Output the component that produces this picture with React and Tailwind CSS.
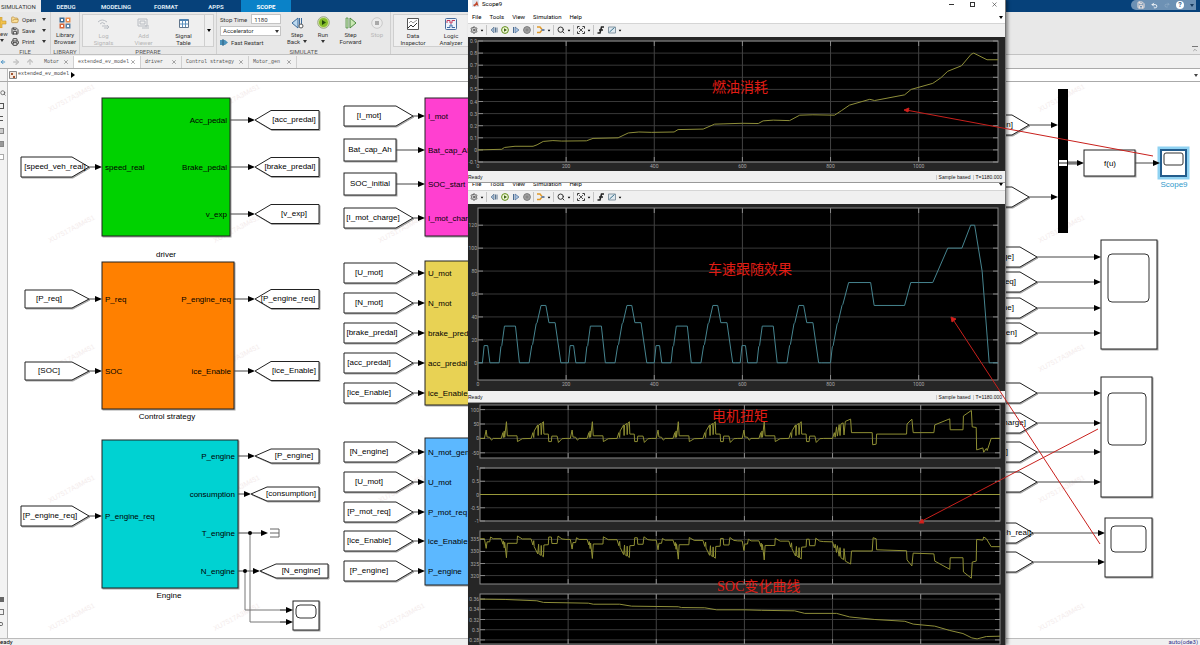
import { ArrowLeft, ArrowRight, ArrowUp, ChevronUp, FolderOpen, Printer, Redo2, Save, Search, Settings, Undo2, X } from 'lucide-react'

const CYCLES = [0, 195, 390, 585]
const repeat = (cycle, drift = 0) =>
  CYCLES.flatMap((start, i) => cycle.map(([t, v]) => [t + start, v - drift * i]))

const FUEL = [
  [0, 0], [54, 0.005], [60, 0.02], [84, 0.03], [125, 0.03], [134, 0.042], [148, 0.07], [170, 0.077], [190, 0.073],
  [246, 0.075], [261, 0.095], [318, 0.1], [341, 0.14], [365, 0.148], [394, 0.145], [445, 0.148], [454, 0.168],
  [511, 0.172], [537, 0.213], [556, 0.215], [600, 0.22], [636, 0.218], [647, 0.24], [670, 0.246], [707, 0.242],
  [730, 0.287], [760, 0.29], [809, 0.287], [825, 0.325], [843, 0.37], [889, 0.418], [900, 0.408], [968, 0.455],
  [983, 0.5], [1032, 0.55], [1050, 0.595], [1066, 0.65], [1097, 0.695], [1119, 0.79], [1125, 0.8], [1155, 0.745], [1180, 0.745],
]

const SPEED = [
  ...repeat([
    [0, 0], [10, 0], [14, 15], [22, 15], [27, 0], [48, 0], [52, 14], [54, 15], [60, 32], [85, 32], [94, 0], [116, 0],
    [122, 15], [124, 16], [132, 34], [134, 35], [143, 50], [154, 50], [161, 35], [175, 35], [188, 0],
  ]),
  [780, 0], [800, 0], [804, 14], [806, 15], [815, 34], [817, 35], [826, 50], [828, 51], [841, 70], [891, 70], [899, 50],
  [968, 50], [982, 70], [1032, 70], [1066, 100], [1098, 100], [1118, 120], [1127, 120], [1144, 80], [1160, 0], [1180, 0],
]

const TORQUE = [
  ...repeat([
    [0, 0], [10, 0], [14, 29], [16, 5], [22, 4], [26, -6], [30, 0], [48, 0], [52, 20], [53, 3], [55, 26], [56, 4],
    [60, 58], [62, 9], [84, 9], [85, -11], [96, -1], [116, 0], [120, 20], [122, 3], [123, 26], [131, 47], [132, 10],
    [133, 46], [138, 52], [139, 13], [141, 54], [144, 58], [145, 15], [155, 15], [156, -11], [162, -11], [163, 8],
    [175, 8], [178, -14], [186, -1],
  ]),
  [780, 0], [800, 0], [804, 20], [806, 4], [809, 40], [811, 8], [815, 48], [817, 10], [819, 50], [824, 54], [826, 12],
  [829, 59], [841, 67], [843, 20], [890, 20], [891, -22], [899, -20], [900, 15], [968, 15], [969, 50], [980, 67],
  [983, 20], [1030, 20], [1032, 47], [1066, 68], [1067, 30], [1096, 30], [1097, 78], [1115, 97], [1117, 40], [1126, 38],
  [1127, -40], [1141, -33], [1143, -48], [1149, -35], [1151, -42], [1160, 0], [1180, 0],
]

const VOLTAGE = [
  ...repeat([
    [0, 335.3], [10, 335.3], [14, 331.3], [16, 334], [22, 334], [24, 336], [30, 335.3], [48, 335.3], [52, 333],
    [53, 334.4], [55, 331.5], [56, 333.8], [60, 327.4], [62, 333.4], [84, 333.4], [85, 336.4], [96, 335.2],
    [116, 335.2], [120, 332.7], [122, 334.5], [123, 332], [131, 329], [133, 333], [134, 329], [138, 328.4],
    [139, 332.5], [140, 328.4], [144, 327.8], [145, 332.7], [155, 332.8], [156, 336], [162, 336], [163, 333.3],
    [175, 333.3], [177, 336.4], [186, 335.2],
  ], 0.3),
  [780, 334.1], [800, 334], [804, 331.5], [806, 333], [809, 329.6], [811, 332.4], [815, 328], [817, 331.6], [819, 327.4],
  [825, 326.6], [826, 331.2], [829, 326], [841, 324.8], [843, 330.2], [890, 330.2], [892, 335.7], [899, 335.3],
  [900, 330.7], [968, 330.3], [969, 326.5], [980, 324], [983, 329.3], [1030, 329], [1032, 326], [1066, 322.6],
  [1067, 327.4], [1096, 327.4], [1097, 321.5], [1115, 318.9], [1117, 325.6], [1126, 326], [1127, 335], [1141, 334.7],
  [1143, 336], [1149, 335.3], [1160, 332], [1180, 332],
]

const SOC = [
  [0, 0.36], [57, 0.3593], [129, 0.3567], [144, 0.3535], [246, 0.352], [257, 0.35], [317, 0.35], [344, 0.3462],
  [450, 0.345], [457, 0.3435], [510, 0.343], [537, 0.339], [600, 0.339], [639, 0.338], [714, 0.337], [737, 0.332],
  [809, 0.332], [839, 0.325], [896, 0.32], [964, 0.3165], [983, 0.311], [1032, 0.307], [1066, 0.2985],
  [1096, 0.2925], [1116, 0.284], [1128, 0.282], [1149, 0.2867], [1180, 0.2873],
]

// One set of axes. left/top/height are the axes box inside a drawing of 538 x boxHeight.
function Plot({ boxHeight, left, top, height, min, max, ticks, data, stroke, showTime = true }) {
  const width = 520
  const px = (t) => left + (t / 1180) * width
  const py = (v) => top + ((max - v) / (max - min)) * height
  return (
    <svg width="538" height={boxHeight} className="block bg-[#262626]">
      <rect x={left} y={top} width={width} height={height} fill="#000" />
      {ticks.map((v) => (
        <g key={v}>
          <path d={`M${left} ${py(v)}h${width}`} stroke="#383838" />
          <path d={`M${left} ${py(v)}h5M${left + width} ${py(v)}h-5`} stroke="#8a8a8a" />
          <text x={left - 1} y={py(v) + 2} textAnchor="end" fontSize="5" fill="#a8a8a8">{v}</text>
        </g>
      ))}
      {[200, 400, 600, 800, 1000].map((t) => (
        <g key={t}>
          <path d={`M${px(t)} ${top}v${height}`} stroke="#424242" />
          <path d={`M${px(t)} ${top}v5M${px(t)} ${top + height}v-5`} stroke="#8a8a8a" />
        </g>
      ))}
      <rect x={left} y={top} width={width} height={height} fill="none" stroke="#8a8a8a" />
      {showTime && [0, 200, 400, 600, 800, 1000].map((t) => (
        <text key={t} x={px(t)} y={top + height + 6} textAnchor="middle" fontSize="5" fill="#a8a8a8">{t}</text>
      ))}
      <polyline points={data.map(([t, v]) => `${px(t)},${py(v)}`).join(' ')} fill="none" stroke={stroke} />
    </svg>
  )
}

function Caret({ className = '' }) {
  return (
    <svg viewBox="0 0 4 3" className={`h-[3px] w-[4px] shrink-0 ${className}`}>
      <path d="M0 0h4L2 3z" fill="currentColor" />
    </svg>
  )
}

const TOOL_ICONS = {
  settings: <Settings size={8} color="#555" strokeWidth={3} />,
  back: <svg width="8" height="8"><path d="M4 1v6L1 4z" fill="#9ab4cf" stroke="#5b7590" strokeWidth=".7" /><path d="M5.500 1.500v5M7 1.500v5" stroke="#5b7590" /></svg>,
  run: <svg width="8" height="8"><circle cx="4" cy="4" r="3.400" fill="#f2f8d8" stroke="#5f8c1a" /><path d="M3 2.200v3.600L6 4z" fill="#3c6414" /></svg>,
  forward: <svg width="8" height="8"><path d="M1.500 1v6" stroke="#4a6c92" /><path d="M3 1l4 3-4 3z" fill="#a9c4e2" stroke="#4a6c92" strokeWidth=".7" /></svg>,
  stop: <svg width="8" height="8"><circle cx="4" cy="4" r="3.400" fill="#a5a5a5" stroke="#7a7a7a" /><path d="M2.500 2.500h3v3h-3z" fill="#888" /></svg>,
  signal: <svg width="9" height="8"><path d="M1 1h3l2 2.500M1 6.500h3l2-2.500" fill="none" stroke="#e09a2c" strokeWidth="1.500" /><path d="M5.500 3h3v2h-3z" fill="#6b83a5" /></svg>,
  zoom: <Search size={8} color="#333" strokeWidth={3} />,
  fit: <svg width="8" height="8"><path d="M.5 2.500v-2h2M5.500.5h2v2M7.500 5.500v2h-2M2.500 7.500h-2v-2" fill="none" stroke="#333" /><path d="M2 2l4 4M6 2l-4 4" stroke="#555" /></svg>,
  trigger: <svg width="8" height="8"><path d="M7 1H4.500L3 7H.5M2 4h4" fill="none" stroke="#222" strokeWidth="1.500" /></svg>,
  measure: <svg width="8" height="8"><path d="M.5 1h7v6h-7z" fill="#dfe8ee" stroke="#8697a3" /><path d="M1.500 6L6.500 1.500" stroke="#3d7590" /></svg>,
}
const TOOLBAR = [
  'settings', 'caret', 'sep', 'back', 'run', 'forward', 'stop', 'sep', 'signal', 'caret', 'sep',
  'zoom', 'caret', 'sep', 'fit', 'caret', 'sep', 'trigger', 'measure', 'caret',
]

function ScopeToolbar() {
  return (
    <div className="flex h-[14px] items-center border-t border-[#d5d5d5] bg-[#f0f0f0] pb-px">
      {TOOLBAR.map((item, i) => {
        if (item === 'sep') return <span key={i} className="mx-px h-[10px] w-px bg-[#c4c4c4]" />
        if (item === 'caret') return <span key={i} className="flex w-[6px] justify-center"><Caret className="scale-75" /></span>
        return <button key={i} aria-label={item} className="flex w-[11px] justify-center">{TOOL_ICONS[item]}</button>
      })}
    </div>
  )
}

function ScopeMenu() {
  return (
    <div className="flex h-[12px] shrink-0 items-center gap-2 bg-white pl-1 text-[6px] leading-none">
      {['File', 'Tools', 'View', 'Simulation', 'Help'].map((m) => <button key={m}>{m}</button>)}
      <Caret className="mr-[2px] ml-auto" />
    </div>
  )
}

function ScopeStatus() {
  return (
    <div className="flex h-[11px] shrink-0 items-center bg-[#f0f0f0] pt-[2px] pr-[3px] font-['Liberation_Sans',sans-serif] text-[5px] leading-none text-[#111]">
      <span className="flex-1">Ready</span>
      <span className="border-l border-[#c8c8c8] px-[2px]">Sample based</span>
      <span className="border-l border-[#c8c8c8] pl-[2px]">T=1180.000</span>
    </div>
  )
}

function ScopeWindows() {
  return (
    <div className="absolute top-0 bottom-0 left-[468px] flex w-[538px] flex-col overflow-hidden border-r border-[#777] bg-[#262626] shadow-[2px_0_3px_rgba(0,0,0,0.4)]">
      <section className="shrink-0">
        <header className="flex h-[11px] items-start bg-white pl-1 text-[6px]">
          <svg width="7" height="7" className="mr-[3px]"><path d="M0 0h7v7H0z" fill="#dfe6ee" /><path d="M1 5l2-1 2-3 1.500 5-2-1-2 1.500z" fill="#c0462a" /></svg>
          <span className="flex-1 leading-[7px]">Scope9</span>
          <div className="flex w-[56px] items-center gap-4 pt-px">
            <button aria-label="Minimize" className="h-px w-[5px] bg-[#333]" />
            <button aria-label="Maximize" className="h-[5px] w-[5px] border border-[#333]" />
            <button aria-label="Close"><X size={7} color="#333" strokeWidth={2} /></button>
          </div>
        </header>
        <ScopeMenu />
        <ScopeToolbar />
        <Plot boxHeight={134} left={10} top={4} height={121} min={-0.1} max={0.9} stroke="#8e8e3a" data={FUEL}
          ticks={[-0.1, 0, 0.1, 0.2, 0.3, 0.4, 0.5, 0.6, 0.7, 0.8, 0.9]} />
        <ScopeStatus />
      </section>
      <section className="shrink-0 border-t border-[#999]">
        <div className="flex h-[7px] items-end overflow-hidden bg-white">
          <div className="flex-1"><ScopeMenu /></div>
        </div>
        <ScopeToolbar />
        <Plot boxHeight={187} left={10} top={4} height={172} min={-15} max={135} stroke="#46848f" data={SPEED}
          ticks={[0, 20, 40, 60, 80, 100, 120]} />
        <ScopeStatus />
      </section>
      <section className="shrink-0 border-t border-[#999]">
        <Plot boxHeight={58} left={12} top={2} height={53} min={-68} max={116} stroke="#8f8f34" data={TORQUE}
          ticks={[-50, 0, 50, 100]} showTime={false} />
        <Plot boxHeight={63} left={12} top={7} height={53} min={-1} max={1} stroke="#99993a" data={[[0, 0], [1180, 0]]}
          ticks={[-1, -0.5, 0, 0.5, 1]} showTime={false} />
        <Plot boxHeight={63} left={12} top={7} height={53} min={316.5} max={338.5} stroke="#8f8f34" data={VOLTAGE}
          ticks={[320, 325, 330, 335]} showTime={false} />
        <Plot boxHeight={60} left={12} top={7} height={50} min={0.272} max={0.37} stroke="#8e8e3a" data={SOC}
          ticks={[0.28, 0.3, 0.32, 0.34, 0.36]} showTime={false} />
      </section>
    </div>
  )
}

/* ---- model canvas ---- */

function Wire({ from, to, y }) {
  return (
    <g>
      <path d={`M${from} ${y}H${to - 5}`} stroke="#444" />
      <path d={`M${to - 7} ${y - 3}L${to} ${y}L${to - 7} ${y + 3}z`} fill="#000" />
    </g>
  )
}

function FromTag({ x, tip, y, h = 20, cx, label }) {
  return (
    <g>
      <path d={`M${x} ${y - h / 2}H${tip - 17}L${tip} ${y}L${tip - 17} ${y + h / 2}H${x}z`} fill="#fff" stroke="#222" className="drop-shadow-[1px_1px_0_rgba(0,0,0,0.35)]" />
      <text x={cx} y={y + 2} textAnchor="middle" fontSize="8">{label}</text>
    </g>
  )
}

function GotoTag({ tip = 255, right = 319, y, h = 19, cx = 294, label }) {
  return (
    <g>
      <path d={`M${right} ${y - h / 2}H${tip + 16}L${tip} ${y}L${tip + 16} ${y + h / 2}H${right}z`} fill="#fff" stroke="#222" className="drop-shadow-[1px_1px_0_rgba(0,0,0,0.35)]" />
      <text x={cx} y={y + 2} textAnchor="middle" fontSize="8">{label}</text>
    </g>
  )
}

function Block({ x, y, w, h, fill = '#fff', name, inputs = [], outputs = [] }) {
  return (
    <g>
      <rect x={x} y={y} width={w} height={h} fill={fill} stroke="#222" className="drop-shadow-[1px_1px_0_rgba(0,0,0,0.35)]" />
      {inputs.map(([label, py]) => <text key={label} x={x + 3} y={py + 3} fontSize="8">{label}</text>)}
      {outputs.map(([label, py]) => <text key={label} x={x + w - 3} y={py + 3} textAnchor="end" fontSize="8">{label}</text>)}
      {name && <text x={x + w / 2 - 1} y={y + h + 10} textAnchor="middle" fontSize="8">{name}</text>}
    </g>
  )
}

function ScopeBlock({ x, y, w, h, screen }) {
  const [sx, sy, sw, sh] = screen
  return (
    <g>
      <Block x={x} y={y} w={w} h={h} />
      <rect x={sx} y={sy} width={sw} height={sh} rx="4" fill="#fff" stroke="#333" />
    </g>
  )
}

const MIDDLE_TAGS = [
  ['[I_mot]', 116, 369], ['[I_mot_charge]', 218, 373],
  ['[U_mot]', 273, 369], ['[N_mot]', 303, 369], ['[brake_predal]', 333, 372], ['[acc_predal]', 363, 369], ['[ice_Enable]', 393, 369],
  ['[N_engine]', 452, 369], ['[U_mot]', 482, 369], ['[P_mot_req]', 512, 369], ['[ice_Enable]', 541, 369], ['[P_engine]', 571, 369],
]

// Tags whose left part is under the scope windows: end of label, label, y, tip, end of wire
const RIGHT_TAGS = [
  [1013, '[consumption]', 125, 1029, 1058], [0, '', 197, 1029, 1058],
  [1014, '[v_charge]', 257, 1037, 1101], [1016, '[P_req]', 282, 1037, 1101], [1014, '[P_engine]', 308, 1037, 1101], [1017, '[N_gen]', 333, 1037, 1101],
  [0, '', 393, 1037, 1101], [1026, '[I_mot_charge]', 423, 1037, 1101], [1008, '[U_mot]', 452, 1037, 1101], [0, '', 482, 1037, 1101],
  [1031, '[speed_veh_real]', 533, 1033, 1105], [0, '', 562, 1033, 1105],
]

const WATERMARKS = [
  [50, 112], [215, 112], [545, 112], [1040, 112], [50, 243], [215, 243], [380, 243], [1040, 243], [50, 372], [215, 372],
  [1040, 372], [50, 503], [215, 503], [380, 503], [1040, 503], [50, 631], [215, 631], [380, 631], [1040, 631],
]

function Model() {
  return (
    <svg viewBox="8 82 1192 556" width="1192" height="556" className="block font-['Liberation_Sans',Arial,sans-serif]">
      {WATERMARKS.map(([x, y]) => (
        <text key={`${x}-${y}`} x={x} y={y} transform={`rotate(-28 ${x} ${y})`} fontSize="7" fill="#f4ecec" aria-hidden="true">XU7517A3M451</text>
      ))}

      <Block x={102} y={98} w={128} h={138} fill="#00d200" inputs={[['speed_real', 167]]}
        outputs={[['Acc_pedal', 120], ['Brake_pedal', 167], ['v_exp', 214]]} />
      <text x="166" y="257" textAnchor="middle" fontSize="8">driver</text>
      <Block x={102} y={262} w={132} h={147} fill="#ff8000" name="Control strategy" inputs={[['P_req', 299], ['SOC', 371]]}
        outputs={[['P_engine_req', 299], ['ice_Enable', 371]]} />
      <Block x={102} y={440} w={136} h={148} fill="#00d2d2" name="Engine" inputs={[['P_engine_req', 516]]}
        outputs={[['P_engine', 456], ['consumption', 494], ['T_engine', 533], ['N_engine', 571]]} />

      <FromTag x={21} tip={89} y={167} cx={55} label="[speed_veh_real]" />
      <FromTag x={25} tip={89} y={299} h={18} cx={49} label="[P_req]" />
      <FromTag x={25} tip={89} y={371} h={18} cx={49} label="[SOC]" />
      <FromTag x={21} tip={89} y={516} cx={50} label="[P_engine_req]" />
      {[167, 299, 371, 516].map((y) => <Wire key={y} from={89} to={102} y={y} />)}

      {[120, 167, 214].map((y) => <Wire key={y} from={230} to={255} y={y} />)}
      {[299, 371].map((y) => <Wire key={y} from={234} to={255} y={y} />)}
      <Wire from={238} to={255} y={456} />
      <Wire from={238} to={251} y={494} />
      <Wire from={238} to={268} y={533} />
      <Wire from={238} to={260} y={571} />
      <GotoTag y={120} label="[acc_predal]" />
      <GotoTag y={167} cx={290} label="[brake_predal]" />
      <GotoTag y={214} label="[v_exp]" />
      <GotoTag y={299} cx={288} label="[P_engine_req]" />
      <GotoTag y={371} label="[ice_Enable]" />
      <GotoTag y={456} h={14} label="[P_engine]" />
      <GotoTag tip={251} y={494} h={14} cx={291} label="[consumption]" />
      <GotoTag tip={260} right={328} y={571} h={14} cx={301} label="[N_engine]" />

      <path d="M270 529h9v8h-9M270 533h9" fill="none" stroke="#666" />
      <path d="M245 571V610H288M250 533V622H288" fill="none" stroke="#777" />
      <circle cx="245" cy="571" r="2" />
      <circle cx="250" cy="533" r="2" />
      <ScopeBlock x={293} y={601} w={26} h={29} screen={[296, 605, 20, 13]} />
      <Wire from={280} to={293} y={610} />
      <Wire from={280} to={293} y={622} />

      <Block x={425} y={98} w={60} h={138} fill="#ff40d0"
        inputs={[['I_mot', 116], ['Bat_cap_Ah', 150], ['SOC_start', 184], ['I_mot_charge', 218]]} />
      <Block x={425} y={261} w={60} h={144} fill="#e8d254"
        inputs={[['U_mot', 273], ['N_mot', 303], ['brake_predal', 333], ['acc_predal', 363], ['ice_Enable', 393]]} />
      <Block x={425} y={438} w={60} h={147} fill="#5cb8ff"
        inputs={[['N_mot_gen', 452], ['U_mot', 482], ['P_mot_req', 512], ['ice_Enable', 541], ['P_engine', 571]]} />
      {MIDDLE_TAGS.map(([label, y, cx]) => (
        <g key={y}>
          <FromTag x={344} tip={413} y={y} cx={cx} label={label} />
          <Wire from={413} to={425} y={y} />
        </g>
      ))}
      {[['Bat_cap_Ah', 150], ['SOC_initial', 184]].map(([label, y]) => (
        <g key={label}>
          <Block x={344} y={y - 11} w={52} h={22} />
          <text x="370" y={y + 2} textAnchor="middle" fontSize="8">{label}</text>
          <Wire from={396} to={425} y={y} />
        </g>
      ))}

      {RIGHT_TAGS.map(([end, label, y, tip, to]) => (
        <g key={y}>
          <path d={`M960 ${y - 10}H${tip - 17}L${tip} ${y}L${tip - 17} ${y + 10}H960`} fill="#fff" stroke="#222" className="drop-shadow-[1px_1px_0_rgba(0,0,0,0.35)]" />
          {label && <text x={end} y={y + 2} textAnchor="end" fontSize="8">{label}</text>}
          <Wire from={tip} to={to} y={y} />
        </g>
      ))}
      <rect x="1058" y="89" width="10" height="144" />
      <path d="M1059 160h8v6h-8z" fill="#fff" />
      <path d="M1059 163h8" stroke="#222" />
      <path d="M1068 162h10M1068 164h10" stroke="#555" />
      <Wire from={1068} to={1084} y={163} />
      <Block x={1084} y={150} w={51} h={26} />
      <text x="1110" y="166" textAnchor="middle" fontSize="8">f(u)</text>
      <rect x="1159" y="148" width="29" height="30" fill="#fff" stroke="#8fd2f2" strokeWidth="3" />
      <rect x="1161" y="150" width="25" height="26" fill="#fff" stroke="#235c8c" strokeWidth="2" />
      <rect x="1164" y="153" width="19" height="12" rx="2" fill="#fff" stroke="#333" />
      <Wire from={1135} to={1160} y={163} />
      <text x="1174" y="187" textAnchor="middle" fontSize="8" fill="#329acb">Scope9</text>
      <ScopeBlock x={1101} y={240} w={56} h={109} screen={[1108, 254, 41, 48]} />
      <ScopeBlock x={1101} y={377} w={51} h={120} screen={[1108, 393, 38, 52]} />
      <ScopeBlock x={1105} y={518} w={47} h={59} screen={[1111, 526, 35, 26]} />
    </svg>
  )
}

/* ---- toolstrip ---- */

function RibbonGroup({ caption, className = '', children }) {
  return (
    <section className={`flex shrink-0 flex-col border-r border-[#d0d0d0] pt-[2px] ${className}`}>
      <div className="flex h-[33px]">{children}</div>
      {caption && <h2 className="h-[7px] text-center text-[6px] leading-[9px] text-[#555]">{caption}</h2>}
    </section>
  )
}

function RibbonButton({ icon, lines, className = '', disabled, caret }) {
  return (
    <button disabled={disabled} className={`flex flex-col items-center pt-[2px] text-[6px] leading-[7px] text-[#333] disabled:text-[#b5b5b5] ${className}`}>
      <span className="mb-[2px] flex h-[13px] items-center justify-center">{icon}</span>
      <span>{lines[0]}</span>
      <span className="flex items-center gap-[3px]">{lines[1]}{caret && <Caret className="my-[2px]" />}</span>
    </button>
  )
}

const icons = {
  library: <svg width="12" height="12"><path d="M.5.5h5v5h-5z" fill="#3c6b93" /><path d="M6.500.5h5v5h-5z" fill="#e98d4d" /><path d="M.5 6.500h5v5h-5z" fill="#d5673b" /><path d="M6.500 6.500h5v5h-5z" fill="#5c82a3" /><path d="M2 2h2v2H2zM8 2h2v2H8zM2 8h2v2H2zM8 8h2v2H8z" fill="#fff" /></svg>,
  log: <svg width="13" height="12" fill="none" stroke="#b8bcc2"><path d="M1 4q4-4 9 0M3 6q2-3 5 0M5 8h2M8 11V7M10 11V7l2 2-2 2" /></svg>,
  viewer: <svg width="13" height="12" fill="none" stroke="#b8bcc2"><path d="M1 1h9v7H1zM3 3h5v3H3zM9 11V7M11 11V7M5 10h3" /></svg>,
  table: <svg width="10" height="11"><path d="M.5 1.500h9v8h-9z" fill="#fff" stroke="#60758c" /><path d="M1 1h8v2H1z" fill="#4e83b2" /><path d="M3.500 3v6M6.500 3v6M1 6h8" stroke="#5d90bd" /></svg>,
  back: <svg width="13" height="12"><path d="M7 1v10L1 6z" fill="#bcd9f0" stroke="#3c6b9b" /><path d="M8.500 1v8M10.500 1v8" stroke="#3c6b9b" /><circle cx="10" cy="9" r="2" fill="#fff" stroke="#555" /></svg>,
  run: <svg width="13" height="13"><circle cx="6.500" cy="6.500" r="5.800" fill="#d4e69a" stroke="#9aa58c" /><circle cx="6.500" cy="6.500" r="4.500" fill="#86bd2a" /><path d="M5 4v5l4-2.500z" fill="#234a0c" /></svg>,
  forward: <svg width="12" height="12"><path d="M1 1h2v10H1z" fill="#cfe6c0" stroke="#4c8a3f" strokeWidth=".8" /><path d="M5 1l6 5-6 5z" fill="#c9e7b3" stroke="#4c8a3f" /></svg>,
  stop: <svg width="12" height="12"><circle cx="6" cy="6" r="5.300" fill="#ebebeb" stroke="#c8c8c8" /><path d="M4 4h4v4H4z" fill="#a8a8a8" /></svg>,
  inspector: <svg width="12" height="12"><path d="M.5.5h11v11H.5z" fill="#fff" stroke="#555" /><path d="M2 5l2-2 2 2 4-3" fill="none" stroke="#999" /><path d="M1 10l3-3 2 2 4-4" fill="none" stroke="#333" /></svg>,
  analyzer: <svg width="12" height="12"><rect x=".5" y=".5" width="11" height="11" rx="1" fill="#eef3fa" stroke="#496d9c" /><path d="M2 5V2.500h3V5h2V2.500h3" fill="none" stroke="#c0395b" /><path d="M2 9.500h3V7h2v2.500h3" fill="none" stroke="#3c6ba5" /></svg>,
}

function Ribbon() {
  return (
    <div className="flex h-[43px] shrink-0 border-b border-[#c2c2c2] bg-[#e8e8e8]">
      <RibbonGroup caption="FILE" className="w-[51px]">
        <button className="flex w-[11px] flex-col items-start pt-[3px] text-[6px] leading-[7px] text-[#333]" aria-label="New">
          <svg width="7" height="11"><path d="M0 0h2v4h4v3H2v4H0z" fill="#f1c24c" stroke="#c39430" strokeWidth=".6" /></svg>
          <span className="mt-[2px]">ew</span>
          <Caret className="mt-[2px]" />
        </button>
        <div className="flex flex-1 flex-col justify-around pr-1 text-[6px] leading-[8px] text-[#333]">
          <button className="flex items-center gap-[3px]"><FolderOpen size={8} color="#b98a33" fill="#f9df9b" />Open<Caret className="ml-auto" /></button>
          <button className="flex items-center gap-[3px]"><Save size={8} color="#444" strokeWidth={3} />Save<Caret className="ml-auto" /></button>
          <button className="flex items-center gap-[3px]"><Printer size={8} color="#444" strokeWidth={3} />Print<Caret className="ml-auto" /></button>
        </div>
      </RibbonGroup>
      <RibbonGroup caption="LIBRARY" className="w-[29px]">
        <RibbonButton icon={icons.library} lines={['Library', 'Browser']} className="w-full" />
      </RibbonGroup>
      <RibbonGroup caption="PREPARE" className="w-[137px] px-[2px]">
        <div className="flex flex-1 border border-[#cfcfcf] bg-[#efefef]">
          <RibbonButton icon={icons.log} lines={['Log', 'Signals']} className="w-[41px]" disabled />
          <RibbonButton icon={icons.viewer} lines={['Add', 'Viewer']} className="w-[39px]" disabled />
          <RibbonButton icon={icons.table} lines={['Signal', 'Table']} className="w-[41px]" />
          <button aria-label="More" className="flex flex-1 items-center justify-center border-l border-[#cfcfcf]"><Caret /></button>
        </div>
      </RibbonGroup>
      <RibbonGroup caption="SIMULATE" className="w-[174px]">
        <div className="flex w-[66px] flex-col justify-between pl-[3px] text-[6px] leading-[9px] text-[#333]">
          <div className="flex items-center gap-1">
            <label htmlFor="stop">Stop Time</label>
            <input id="stop" defaultValue="1180" className="h-[10px] w-[30px] border border-[#c4c4c4] bg-white px-[2px]" />
          </div>
          <div className="relative">
            <select aria-label="Simulation mode" defaultValue="Accelerator" className="block h-[10px] w-[61px] appearance-none border border-[#c4c4c4] bg-white pl-[2px] text-[6px] leading-[8px]">
              <option>Accelerator</option>
              <option>Normal</option>
            </select>
            <Caret className="pointer-events-none absolute top-1 right-1" />
          </div>
          <button className="flex items-center gap-[2px]">
            <svg width="9" height="7"><path d="M0 1h5l3 2.500L5 6H0z" fill="#4c93bb" /><path d="M3 0v7" stroke="#2c5c7c" /></svg>Fast Restart
          </button>
        </div>
        <RibbonButton icon={icons.back} lines={['Step', 'Back']} className="w-[28px]" caret />
        <RibbonButton icon={icons.run} lines={['Run', '']} className="w-[24px]" caret />
        <RibbonButton icon={icons.forward} lines={['Step', 'Forward']} className="w-[31px]" />
        <RibbonButton icon={icons.stop} lines={['Stop', '']} className="w-[22px]" disabled />
      </RibbonGroup>
      <RibbonGroup className="w-[160px] border-r-0 px-[2px]">
        <div className="flex flex-1 border border-[#cfcfcf] bg-[#efefef]">
          <RibbonButton icon={icons.inspector} lines={['Data', 'Inspector']} className="w-[38px]" />
          <RibbonButton icon={icons.analyzer} lines={['Logic', 'Analyzer']} className="w-[38px]" />
        </div>
      </RibbonGroup>
      <button aria-label="Collapse toolstrip" className="mt-auto mr-[2px] mb-px ml-auto border-t border-[#777]"><ChevronUp size={6} color="#666" /></button>
    </div>
  )
}

function TitleTabs() {
  return (
    <nav className="flex h-[12px] shrink-0 bg-[#06417a] text-[6px] leading-[11px] font-bold text-[#dbe7f2]">
      <button className="w-[41px] bg-[#ececec] pl-px text-left font-normal text-[#333]">SIMULATION</button>
      {['DEBUG', 'MODELING', 'FORMAT', 'APPS'].map((t) => <button key={t} className="w-[50px]">{t}</button>)}
      <button className="w-[50px] bg-[#0a82c8] text-white">SCOPE</button>
      <div className="mr-1 ml-auto flex h-[10px] w-[65px] items-center gap-[6px] rounded-l-full bg-[#6d91b4] pl-[6px]">
        <Save size={8} color="#f3e6e0" strokeWidth={3} className="shrink-0" />
        <Undo2 size={7} color="#fff" strokeWidth={3} className="shrink-0" />
        <Redo2 size={6} color="#8fabc6" strokeWidth={3} className="shrink-0" />
        <span className="flex h-[8px] w-[8px] shrink-0 items-center justify-center rounded-full bg-white text-[7px] leading-none text-[#345f8a]">?</span>
        <Caret className="text-[#173c60]" />
      </div>
    </nav>
  )
}

const FILES = [
  ['Motor', 'w-[34px]'],
  ['extended_ev_model', 'w-[67px] bg-white'],
  ['driver', 'w-[41px]'],
  ['Control strategy', 'w-[67px]'],
  ['Motor_gen', 'w-[48px]'],
]

function FileTabs() {
  return (
    <div className="flex h-[14px] shrink-0 items-end border-b border-[#aaa] bg-[#f0f0f0] font-['Liberation_Mono',monospace] text-[5px] leading-none text-[#555]">
      <div className="flex h-[12px] w-[40px] items-center gap-[6px]">
        <ArrowLeft size={6} color="#4c93c4" strokeWidth={4} />
        <ArrowRight size={8} color="#c4c4c4" strokeWidth={4} />
        <ArrowUp size={8} color="#c4c4c4" strokeWidth={4} />
      </div>
      {FILES.map(([name, look]) => (
        <button key={name} className={`flex h-[12px] items-center justify-between border-r border-[#d0d0d0] pr-1 pl-1 ${look}`}>
          {name}
          <X size={6} strokeWidth={2} />
        </button>
      ))}
    </div>
  )
}

function SideRail() {
  return (
    <aside className="flex w-[8px] shrink-0 flex-col justify-between overflow-hidden border-r border-[#bbb] bg-[#f3f3f3] pt-2 pb-3">
      <div className="flex flex-col gap-[7px]">
        <Search size={6} color="#555" strokeWidth={3} />
        <span className="h-[6px] w-[4px] border border-l-0 border-[#555]" />
        <span className="h-[5px] w-[3px] border-y border-[#555]" />
        <span className="h-[6px] w-[4px] border border-l-0 border-[#888] bg-[#ccc]" />
        <span className="h-[6px] w-[4px] border border-l-0 border-[#888] bg-[#999]" />
        <span className="h-[6px] w-[4px] border border-l-0 border-[#aaa] bg-white" />
      </div>
      <div className="flex flex-col gap-[7px]">
        <span className="h-[5px] w-[4px] bg-[#666]" />
        <span className="h-[6px] w-[4px] border border-l-0 border-[#777]" />
        <span className="h-[4px] w-[3px] rounded-r-full border border-l-0 border-[#666]" />
      </div>
    </aside>
  )
}

const NOTES = [
  [712, 92, '燃油消耗'],
  [708, 274, '车速跟随效果'],
  [712, 421, '电机扭矩'],
  [717, 591, 'SOC变化曲线'],
]

function Annotations() {
  return (
    <svg width="1200" height="645" className="pointer-events-none absolute top-0 left-0 font-['Liberation_Serif','Noto_Sans_CJK_SC',serif]">
      <g stroke="#c8201c" fill="#d8201c">
        <path d="M1153 156L906 110M1100 544L952 318M1098 429L920 522" strokeWidth="1" />
        <path d="M904 110L909 108L908 112zM951 317L956 319L952 322zM919 523L922 519L924 523z" />
      </g>
      {NOTES.map(([x, y, text]) => <text key={text} x={x} y={y} fontSize="14" fill="#e01c14">{text}</text>)}
    </svg>
  )
}

export default function App() {
  return (
    <div className="relative flex h-screen flex-col overflow-hidden bg-white font-[Roboto,sans-serif] text-black">
      <TitleTabs />
      <Ribbon />
      <FileTabs />
      <div className="flex h-[13px] shrink-0 items-center border-b border-[#aaa] bg-white pr-[2px] font-['Liberation_Mono',monospace] text-[5px] text-[#444]">
        <span className="mr-px h-full w-[8px] border-r border-[#bbb] bg-[#f3f3f3]" />
        <svg width="8" height="8"><path d="M.5.5h7v7h-7z" fill="#f3e7dc" stroke="#888" /><path d="M2 2h2v2H2zM4 5h2v2H4z" fill="#a5532c" /></svg>
        <span className="ml-px">extended_ev_model</span>
        <svg width="4" height="6" className="ml-[2px]"><path d="M0 0l4 3-4 3z" /></svg>
        <Caret className="ml-auto" />
      </div>
      <div className="flex min-h-0 flex-1">
        <SideRail />
        <main className="min-w-0 flex-1 overflow-hidden"><Model /></main>
      </div>
      <footer className="flex h-[7px] shrink-0 items-center justify-between overflow-hidden border-t border-[#bbb] bg-[#f0f0f0] pr-[2px] text-[6px] leading-none">
        <span>eady</span>
        <span className="text-[#30308c]">auto(ode3)</span>
      </footer>
      <ScopeWindows />
      <Annotations />
    </div>
  )
}
